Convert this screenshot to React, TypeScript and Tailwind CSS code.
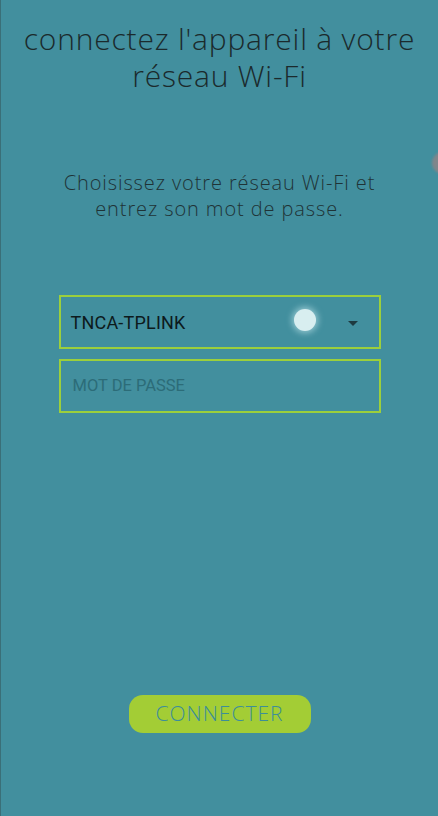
const App = () => {
  return (
    <div className="relative w-[438px] h-[816px] overflow-hidden bg-[#428f9e] border-l border-[#3a6f78] font-['Open_Sans','Lato',sans-serif]">
      {/* edge touch indicator */}
      <div className="absolute left-[431px] top-[152px] w-[22px] h-[22px] rounded-full bg-[#8e8386]/80 blur-[1px]" />

      <div className="flex flex-col items-center">
        <h1 className="mt-[20px] text-[30px] leading-[37px] font-light tracking-[0.8px] text-[#1b2a2c] text-center">
          connectez l'appareil à votre
          <br />
          réseau Wi-Fi
        </h1>

        <p className="mt-[76px] text-[20px] leading-[26px] font-light tracking-[0.9px] text-[#1f3336] text-center">
          Choisissez votre réseau Wi-Fi et
          <br />
          entrez son mot de passe.
        </p>

        <div className="mt-[73px] w-[322px] flex flex-col gap-[10px] font-['Roboto',sans-serif]">
          <div className="relative h-[54px] border-2 border-[#9ccf3c] flex items-center pl-[10px] pr-[20px]">
            <span className="text-[18px] font-normal tracking-[0.2px] text-[#0d1a1c]">TNCA-TPLINK</span>
            <div className="absolute left-[233px] top-[12px] w-[22px] h-[22px] rounded-full bg-[#d8eef0] shadow-[0_0_6px_2px_rgba(200,235,240,0.6)]" />
            <svg className="ml-auto mt-[4px]" width="12" height="6" viewBox="0 0 12 6">
              <path d="M1 0 L11 0 L6 5 Z" fill="#1d3a40" />
            </svg>
          </div>
          <div className="h-[54px] border-2 border-[#9ccf3c] flex items-center pl-[12px]">
            <span className="text-[16.5px] text-[#2c6c78]">MOT DE PASSE</span>
          </div>
        </div>

        <button className="mt-[282px] w-[182px] h-[38px] rounded-[14px] bg-[#a3cd35] text-[21px] font-light tracking-[1px] text-[#3d8e99]">
          CONNECTER
        </button>
      </div>
    </div>
  );
};

export default App;
